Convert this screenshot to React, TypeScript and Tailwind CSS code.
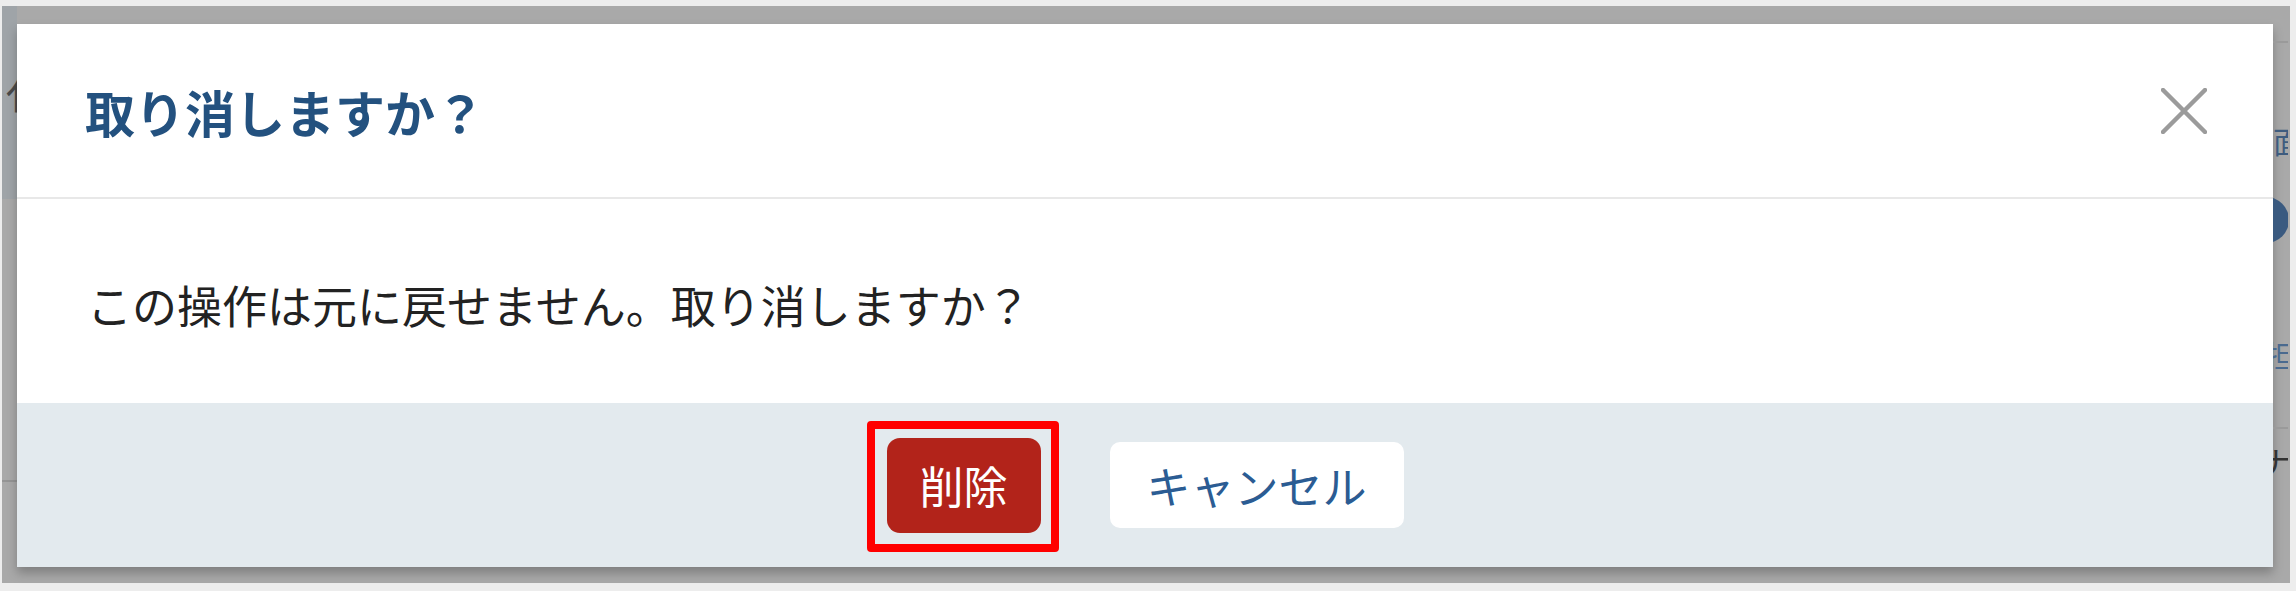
const jp = { fontFamily: '"Noto Sans CJK JP", "Noto Sans", sans-serif' };

const CloseIcon = () => (
  <svg width="46" height="46" viewBox="0 0 46 46" className="block">
    <path d="M2 2 L44 44 M44 2 L2 44" stroke="#9b9b9b" strokeWidth="4.5" strokeLinecap="round" fill="none" />
  </svg>
);

const ConfirmDialog = () => {
  return (
    <div className="w-[2256px] h-[543px] bg-white flex flex-col shadow-[0_6px_10px_rgba(0,0,0,0.25)]" style={jp}>
      <div className="h-[175px] shrink-0 flex items-center justify-between pl-[68px] pr-[66px] border-b-2 border-[#e8e8e8]">
        <h2 className="text-[50px] leading-none font-bold text-[#23517f]">取り消しますか？</h2>
        <button className="p-0">
          <CloseIcon />
        </button>
      </div>
      <div className="h-[204px] shrink-0 flex items-center pl-[70px] pt-[6px]">
        <p className="text-[45px] leading-none text-[#222222]">この操作は元に戻せません。取り消しますか？</p>
      </div>
      <div className="flex-1 bg-[#e3eaee] flex items-center justify-center gap-[69px]">
        <div className="relative">
          <button className="h-[95px] px-[33px] rounded-[13px] bg-[#b2231a] text-white text-[44px] leading-none">
            削除
          </button>
          <span className="absolute -left-[20px] -right-[18px] -top-[17px] -bottom-[19px] border-[8px] border-[#ff0000] rounded-[4px]" />
        </div>
        <button className="h-[86px] px-[37px] rounded-[10px] bg-white text-[#2b5c93] text-[44px] leading-none">
          キャンセル
        </button>
      </div>
    </div>
  );
};

export default function App() {
  return (
    <div className="w-[2296px] h-[591px] bg-[#ededed] pt-[6px] pl-[2px] overflow-hidden">
      <div className="w-[2288px] h-[577px] bg-[#a9a9a9] flex">
        <div className="w-[15px] shrink-0 flex flex-col overflow-hidden">
          <div className="h-[193px] bg-[#9fa4a8] pt-[66px] pl-[4px]">
            <span className="block text-[40px] leading-none text-[#4a4a4a]" style={jp}>仆</span>
          </div>
          <div className="h-[283px] border-b-2 border-[#959595]" />
        </div>
        <div className="pt-[18px] shrink-0">
          <ConfirmDialog />
        </div>
        <div className="w-[15px] shrink-0 flex flex-col overflow-hidden" style={jp}>
          <div className="h-[37px] border-b-2 border-[#9a9a9a]" />
          <span className="mt-[82px] block w-[40px] text-[30px] leading-none text-[#3e5c7f]">面</span>
          <div className="mt-[42px] ml-[-30px] w-[46px] h-[46px] rounded-full bg-[#3a5a80]" />
          <span className="mt-[96px] ml-[-8px] block w-[40px] text-[30px] leading-none text-[#4a6a8f]">担</span>
          <div className="mt-[58px] h-[2px] bg-[#9a9a9a]" />
          <span className="mt-[16px] ml-[-14px] block w-[40px] text-[32px] leading-none text-[#333333]">ナ</span>
        </div>
      </div>
    </div>
  );
}
